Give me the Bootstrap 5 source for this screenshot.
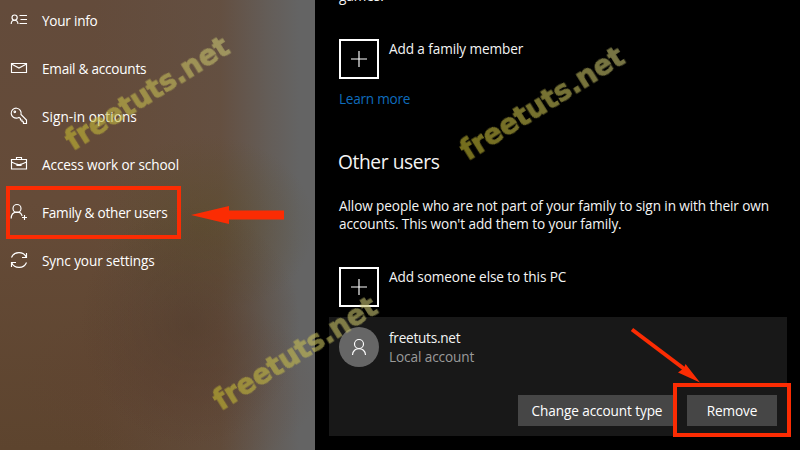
<!DOCTYPE html>
<html lang="en">
<head>
<meta charset="utf-8">
<meta name="viewport" content="width=device-width, initial-scale=1">
<title>Family &amp; other users</title>
<link href="https://cdn.jsdelivr.net/npm/bootstrap@5.3.0/dist/css/bootstrap.min.css" rel="stylesheet">
<style>
body{font-family:"Open Sans","Noto Sans",sans-serif;font-size:13.6px;line-height:18px;letter-spacing:-.1px;background:#000;color:#f4f4f4}
.stage{width:800px;height:450px}
.side{width:315px;
 background:
  radial-gradient(ellipse 110px 120px at 190px 325px,rgba(80,58,42,.55),transparent),
  radial-gradient(ellipse 110px 90px at 205px 225px,rgba(88,74,38,.5),transparent),
  radial-gradient(ellipse 150px 90px at 170px 385px,rgba(96,66,50,.5),transparent),
  linear-gradient(90deg,transparent 30%,rgba(100,84,72,.5) 70%,rgba(100,96,93,.85) 85%,#646464 95%),
  linear-gradient(180deg,#634b3b,#654b38 45%,#5d442e)}
.menu-list{margin-top:-3px}
.menu-item{height:48px;padding-left:10px;gap:14px;color:#fff}
.menu-item svg{width:18px;height:18px;flex:none;position:relative;top:-1px}
.tight{letter-spacing:-.25px}
.loose{letter-spacing:.05px}
svg.line{fill:none;stroke:#fff;stroke-width:1.15}
.main{width:485px;padding-left:14px;padding-right:13px}
.inset{padding-left:10px}
.clipped{height:7px;line-height:18px}
.clipped span{margin-top:-13px}
.add-box{width:40px;height:40px;border:2px solid #fff;flex:none}
.add-row{gap:10px}
.add-label{padding-top:1px}
.first-add{margin-top:32px}
.learn-row{margin-top:11px}
.learn{color:#0f6cbd;text-decoration:none}
h1.title{font-size:19.2px;line-height:26px;font-weight:400;letter-spacing:-.4px;margin:41px 0 0 -1px}
.intro{margin-top:22px}
.second-add{margin-top:34px}
.account{height:119px;margin-top:10px;background:#181818}
.account .who{padding-top:10px}
.who-text{padding-top:1px;line-height:19px}
.avatar{width:40px;height:40px;background:#666;flex:none}
.muted{color:#9a9a9a}
.actions{gap:11px;padding:0 10px 10px}
.act{height:31px;border-radius:0;background:#464646;color:#fff;font-size:13.6px;line-height:18px;letter-spacing:-.1px;padding:0;border:0}
.act:hover{background:#555;color:#fff}
.w-change{width:158px}.w-remove{width:90px}
.notes{inset:0;pointer-events:none}
.wm{font-family:"DejaVu Sans",sans-serif;font-weight:700;font-size:28px;letter-spacing:0}
</style>
<script src="https://cdn.jsdelivr.net/npm/bootstrap@5.3.0/dist/js/bootstrap.bundle.min.js"></script>
</head>
<body>
<div class="stage d-flex position-relative overflow-hidden">
 <nav class="side flex-shrink-0">
  <div class="menu-list d-flex flex-column">
   <div class="menu-item d-flex align-items-center"><svg class="line" viewBox="0 0 18 18"><circle cx="4.6" cy="6.6" r="2.6"/><path d="M1.2 13c0-5 6.8-5 6.8 0M9.5 4.5h7.500M10.500 8.500h6.500M9.500 12.500h7.500"/></svg><span class="tight">Your info</span></div>
   <div class="menu-item d-flex align-items-center"><svg class="line" viewBox="0 0 18 18"><path d="M1.5 4.5h15v9h-15zM1.5 5l7.5 4 7.5-4"/></svg><span class="tight">Email &amp; accounts</span></div>
   <div class="menu-item d-flex align-items-center"><svg class="line" viewBox="0 0 18 18"><path d="M7.5 11A5 5 0 1 1 11 7.5L16.5 13v3.5h-3V15l-1.5-.5V13h-1.5v-1.5L9 10.5z"/><circle cx="4.8" cy="4.8" r=".8"/></svg><span class="loose">Sign-in options</span></div>
   <div class="menu-item d-flex align-items-center"><svg class="line" viewBox="0 0 18 18"><path d="M1.5 4.500h15V14h-15zM6.500 4.500v-2h5v2M1.500 7L7 9.500h4L16.500 7M7 8.500v2h4v-2"/></svg><span>Access work or school</span></div>
   <div class="menu-item d-flex align-items-center"><svg class="line" viewBox="0 0 18 18"><circle cx="7" cy="5.5" r="4"/><path d="M1.2 15.5c0-8 9.500-8 11-2.500M14.500 12v5M12 14.500h5"/></svg><span class="tight">Family &amp; other users</span></div>
   <div class="menu-item d-flex align-items-center"><svg class="line" viewBox="0 0 18 18"><path d="M1.5 6.5C4 .2 13.500-.2 16.300 6.300M16.500 2v4.500H12M16.500 11.500C14 17.800 4.500 18.200 1.700 11.700M1.500 16v-4.500H6"/></svg><span>Sync your settings</span></div>
  </div>
 </nav>
 <main class="main">
  <div class="inset clipped overflow-hidden"><span class="d-block">games.</span></div>
  <div class="inset add-row first-add d-flex"><div class="add-box d-flex align-items-center justify-content-center"><svg class="line" width="16" height="16"><path d="M8 0v16M0 8h16"/></svg></div><span class="add-label">Add a family member</span></div>
  <div class="inset learn-row"><a class="learn tight" href="#">Learn more</a></div>
  <h1 class="title inset">Other users</h1>
  <p class="inset intro mb-0 text-nowrap">Allow people who are not part of your family to sign in with their own<br>accounts. This won't add them to your family.</p>
  <div class="inset add-row second-add d-flex"><div class="add-box d-flex align-items-center justify-content-center"><svg class="line" width="16" height="16"><path d="M8 0v16M0 8h16"/></svg></div><span class="add-label">Add someone else to this PC</span></div>
  <section class="account d-flex flex-column justify-content-between">
   <div class="inset add-row who d-flex"><div class="avatar rounded-circle d-flex align-items-center justify-content-center"><svg class="line" width="16" height="18"><circle cx="8" cy="6" r="4.5"/><path d="M1.5 17c0-8.500 13-8.500 13 0"/></svg></div><div class="who-text"><div class="tight">freetuts.net</div><div class="muted">Local account</div></div></div>
   <div class="actions d-flex justify-content-end"><button class="btn act w-change">Change account type</button><button class="btn act w-remove">Remove</button></div>
  </section>
 </main>
 <svg class="notes position-absolute" width="800" height="450">
  <defs><linearGradient id="g" x1="0" x2="1"><stop offset="0" stop-color="#c4b830"/><stop offset="1" stop-color="#c6c274"/></linearGradient></defs>
  <g class="wm" fill="url(#g)" stroke="url(#g)" stroke-width=".9" opacity=".6">
   <text transform="translate(73 151) rotate(-32)" textLength="187" lengthAdjust="spacingAndGlyphs">freetuts.net</text>
   <text transform="translate(468 161) rotate(-32)" textLength="187" lengthAdjust="spacingAndGlyphs">freetuts.net</text>
   <text transform="translate(221 411) rotate(-32)" textLength="187" lengthAdjust="spacingAndGlyphs">freetuts.net</text>
  </g>
  <g fill="none" stroke="#fb2c03" stroke-width="4"><rect x="8" y="188" width="171" height="49"/><rect x="675" y="385" width="114" height="50"/><path d="M632 329.5L687 371"/></g>
  <g fill="#fb2c03"><path d="M191 215l38-9v4.500h55v9h-55v4.500z"/><path d="M700 382.500l-22-10 6-4.500 1.500-4z"/></g>
 </svg>
</div>
</body>
</html>
